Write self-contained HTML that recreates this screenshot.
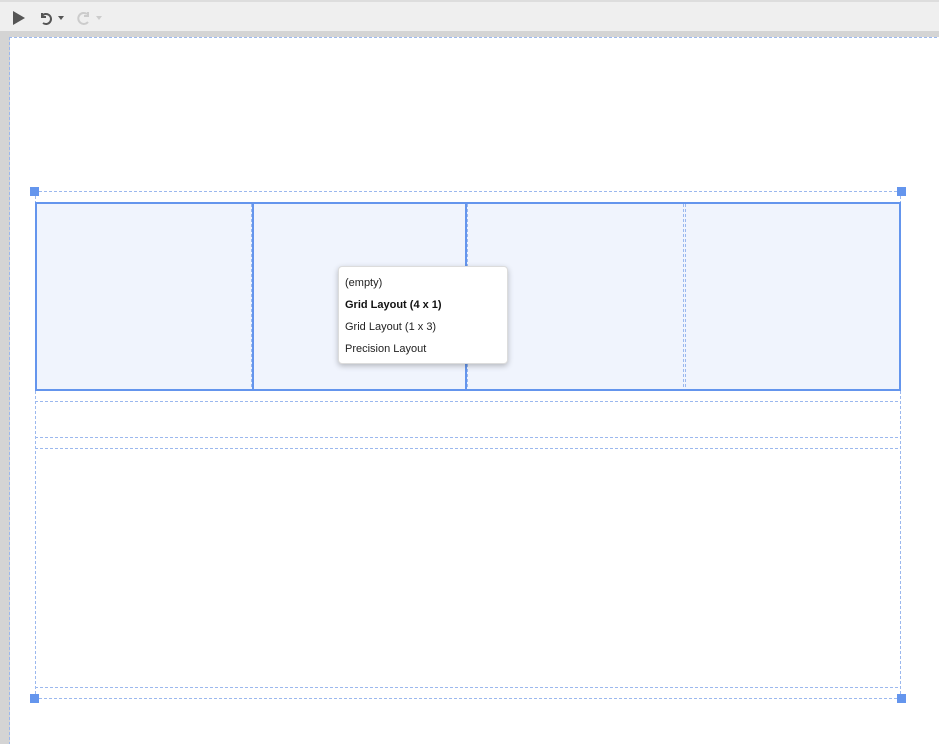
<!DOCTYPE html>
<html><head><style>
*{margin:0;padding:0;box-sizing:border-box}
body{width:939px;height:744px;position:relative;background:#d4d4d4;font-family:"Segoe UI","Liberation Sans",sans-serif;overflow:hidden}
.a{position:absolute}
.dh{position:absolute;height:1px;background:repeating-linear-gradient(90deg,#9bb8ee 0 3px,transparent 3px 5px)}
.dv{position:absolute;width:1px;background:repeating-linear-gradient(180deg,#9bb8ee 0 3px,transparent 3px 5px)}
.h{position:absolute;width:9px;height:9px;background:#6495ed}
.mi{position:absolute;left:6px;font-size:11px;color:#222}
</style></head><body>
<div class="a" style="left:0;top:0;width:939px;height:2px;background:#ddd"></div>
<div class="a" style="left:0;top:2px;width:939px;height:29px;background:#efefef"></div>
<svg class="a" style="left:0;top:2px" width="120" height="29">
<polygon points="13,9 13,23 25,16" fill="#555"/>
<path d="M42,11 L42,15 L46,15 M42,14 A5,5 0 1 1 43,21" fill="none" stroke="#555" stroke-width="2"/>
<polygon points="58,14 64,14 61,18" fill="#555"/>
<path d="M87,12 A5.5,5.5 0 1 0 88,20 M88,10 L88,14 L84,14" fill="none" stroke="#ccc" stroke-width="2"/>
<polygon points="96,14 102,14 99,18" fill="#ccc"/>
</svg>
<div class="a" style="left:10px;top:37px;width:929px;height:707px;background:#fff"></div>
<div class="dh" style="left:9px;top:37px;width:930px"></div>
<div class="dv" style="left:9px;top:37px;height:707px"></div>

<div class="dh" style="left:34px;top:191px;width:868px"></div>
<div class="dh" style="left:34px;top:698px;width:868px"></div>
<div class="dv" style="left:35px;top:191px;height:507px"></div>
<div class="dv" style="left:900px;top:191px;height:507px"></div>
<div class="h" style="left:30px;top:187px"></div>
<div class="h" style="left:897px;top:187px"></div>
<div class="h" style="left:30px;top:694px"></div>
<div class="h" style="left:897px;top:694px"></div>

<div class="a" style="left:35px;top:202px;width:866px;height:189px;background:#f0f4fd;border:2px solid #6495ed"></div>
<div class="dv" style="left:251px;top:204px;height:185px"></div>
<div class="a" style="left:252px;top:204px;width:2px;height:185px;background:#6495ed"></div>
<div class="a" style="left:465px;top:204px;width:2px;height:185px;background:#6495ed"></div>
<div class="dv" style="left:467px;top:204px;height:185px"></div>
<div class="dv" style="left:683px;top:204px;height:185px"></div>
<div class="dv" style="left:685px;top:204px;height:185px"></div>

<div class="dh" style="left:35px;top:401px;width:866px"></div>
<div class="dh" style="left:35px;top:437px;width:866px"></div>
<div class="dh" style="left:35px;top:448px;width:866px"></div>
<div class="dh" style="left:35px;top:687px;width:866px"></div>

<div class="a" style="left:338px;top:266px;width:170px;height:98px;background:#fff;border:1px solid #dcdcdc;border-radius:4px;box-shadow:0 2px 6px rgba(0,0,0,.25)">
<div class="mi" style="top:10px">(empty)</div>
<div class="mi" style="top:32px;font-weight:bold;color:#111">Grid Layout (4 x 1)</div>
<div class="mi" style="top:54px">Grid Layout (1 x 3)</div>
<div class="mi" style="top:76px">Precision Layout</div>
</div>
</body></html>
